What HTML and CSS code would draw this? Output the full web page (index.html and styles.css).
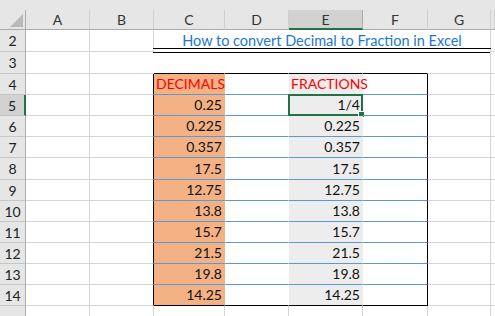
FILE: index.html
```html
<!DOCTYPE html>
<html lang="en">
<head>
    <meta charset="UTF-8">
    <title>How to convert Decimal to Fraction in Excel</title>
    <link rel="stylesheet" href="styles.css">
</head>
<body>
    <div class="sheet">
        <div class="band"></div>

        <!-- column headers -->
        <div class="row head">
            <div class="corner">
                <svg width="13" height="13" viewBox="0 0 13 13"><polygon points="13,0 13,13 0,13" fill="#b9b9b9"/></svg>
            </div>
            <div class="ch">A</div>
            <div class="ch">B</div>
            <div class="ch">C</div>
            <div class="ch">D</div>
            <div class="ch on">E</div>
            <div class="ch">F</div>
            <div class="ch">G</div>
            <div class="ch"></div>
        </div>

        <div class="row tall">
            <div class="rh">2</div>
            <div class="c"></div>
            <div class="c"></div>
            <div class="c title">How to convert Decimal to Fraction in Excel</div>
            <div class="c"></div>
        </div>

        <div class="row tall">
            <div class="rh">3</div>
            <div class="c"></div>
            <div class="c blank"></div>
            <div class="c cap"></div>
            <div class="c cap"></div>
            <div class="c cap"></div>
            <div class="c cap"></div>
            <div class="c"></div>
            <div class="c"></div>
        </div>

        <div class="row">
            <div class="rh">4</div>
            <div class="c"></div>
            <div class="c edge"></div>
            <div class="c t dec label">DECIMALS</div>
            <div class="c t"></div>
            <div class="c t frac label">FRACTIONS</div>
            <div class="c t end"></div>
            <div class="c"></div>
            <div class="c"></div>
        </div>

        <div class="row">
            <div class="rh on">5</div>
            <div class="c"></div>
            <div class="c edge"></div>
            <div class="c t dec num">0.25</div>
            <div class="c t"></div>
            <div class="c t frac num active">1/4<span class="sel"><span class="handle"></span></span></div>
            <div class="c t end"></div>
            <div class="c"></div>
            <div class="c"></div>
        </div>

        <div class="row">
            <div class="rh">6</div>
            <div class="c"></div>
            <div class="c edge"></div>
            <div class="c t dec num">0.225</div>
            <div class="c t"></div>
            <div class="c t frac num">0.225</div>
            <div class="c t end"></div>
            <div class="c"></div>
            <div class="c"></div>
        </div>

        <div class="row">
            <div class="rh">7</div>
            <div class="c"></div>
            <div class="c edge"></div>
            <div class="c t dec num">0.357</div>
            <div class="c t"></div>
            <div class="c t frac num">0.357</div>
            <div class="c t end"></div>
            <div class="c"></div>
            <div class="c"></div>
        </div>

        <div class="row tall">
            <div class="rh">8</div>
            <div class="c"></div>
            <div class="c edge"></div>
            <div class="c t dec num">17.5</div>
            <div class="c t"></div>
            <div class="c t frac num">17.5</div>
            <div class="c t end"></div>
            <div class="c"></div>
            <div class="c"></div>
        </div>

        <div class="row">
            <div class="rh">9</div>
            <div class="c"></div>
            <div class="c edge"></div>
            <div class="c t dec num">12.75</div>
            <div class="c t"></div>
            <div class="c t frac num">12.75</div>
            <div class="c t end"></div>
            <div class="c"></div>
            <div class="c"></div>
        </div>

        <div class="row">
            <div class="rh">10</div>
            <div class="c"></div>
            <div class="c edge"></div>
            <div class="c t dec num">13.8</div>
            <div class="c t"></div>
            <div class="c t frac num">13.8</div>
            <div class="c t end"></div>
            <div class="c"></div>
            <div class="c"></div>
        </div>

        <div class="row">
            <div class="rh">11</div>
            <div class="c"></div>
            <div class="c edge"></div>
            <div class="c t dec num">15.7</div>
            <div class="c t"></div>
            <div class="c t frac num">15.7</div>
            <div class="c t end"></div>
            <div class="c"></div>
            <div class="c"></div>
        </div>

        <div class="row">
            <div class="rh">12</div>
            <div class="c"></div>
            <div class="c edge"></div>
            <div class="c t dec num">21.5</div>
            <div class="c t"></div>
            <div class="c t frac num">21.5</div>
            <div class="c t end"></div>
            <div class="c"></div>
            <div class="c"></div>
        </div>

        <div class="row">
            <div class="rh">13</div>
            <div class="c"></div>
            <div class="c edge"></div>
            <div class="c t dec num">19.8</div>
            <div class="c t"></div>
            <div class="c t frac num">19.8</div>
            <div class="c t end"></div>
            <div class="c"></div>
            <div class="c"></div>
        </div>

        <div class="row bottom">
            <div class="rh">14</div>
            <div class="c"></div>
            <div class="c edge"></div>
            <div class="c t dec num">14.25</div>
            <div class="c t"></div>
            <div class="c t frac num">14.25</div>
            <div class="c t end"></div>
            <div class="c"></div>
            <div class="c"></div>
        </div>

        <!-- row 15, only its top edge is in view -->
        <div class="row">
            <div class="rh"></div>
            <div class="c"></div>
            <div class="c"></div>
            <div class="c"></div>
            <div class="c"></div>
            <div class="c"></div>
            <div class="c"></div>
            <div class="c"></div>
            <div class="c"></div>
        </div>
    </div>
</body>
</html>
```

FILE: styles.css
```css
/* Excel-like worksheet */
* {
    margin: 0;
    padding: 0;
    box-sizing: border-box;
}

body {
    background: #fff;
    overflow: hidden;
}

.sheet {
    font-family: Lato, 'Liberation Sans', sans-serif;
    font-size: 14px;
    color: #111;
}

.band {
    height: 10px;
    background: #e6e6e6;
}

.row {
    display: grid;
    grid-template-columns: 26px 64px 64px 71px 64px 74px 65px 63px 1fr;
    height: 21px;
}

.row.tall {
    height: 22px;
}

.row.head {
    height: 20px;
}

/* headers */
.corner {
    background: #e6e6e6;
    border-right: 1px solid #ababab;
    border-bottom: 1px solid #ababab;
    display: flex;
    align-items: flex-end;
    justify-content: flex-end;
    padding: 0 2px 2px 0;
}

.corner svg {
    display: block;
}

.ch {
    background: #e6e6e6;
    border-right: 1px solid #cfcfcf;
    border-bottom: 1px solid #ababab;
    display: flex;
    align-items: center;
    justify-content: center;
    color: #333;
}

.ch.on {
    background: #d2d2d2;
    border-right-color: #ababab;
    border-bottom: 2px solid #217346;
}

.rh {
    background: #e6e6e6;
    border-right: 1px solid #ababab;
    border-bottom: 1px solid #c6c6c6;
    display: flex;
    align-items: center;
    justify-content: center;
    color: #222;
}

.rh.on {
    background: #d2d2d2;
    border-right: 2px solid #217346;
}

/* cells */
.c {
    border-right: 1px solid #d4d4d4;
    border-bottom: 1px solid #d4d4d4;
    display: flex;
    align-items: flex-end;
    padding: 0 2px;
    line-height: 20px;
    white-space: nowrap;
    position: relative;
}

.title {
    grid-column: span 5;
    justify-content: center;
    font-size: 14.5px;
    color: #1e78cf;
    border-bottom-color: transparent;
}

.title::after {
    content: "";
    position: absolute;
    left: -1px;
    right: -1px;
    bottom: -2px;
    height: 3px;
    border-top: 1px solid #000;
    border-bottom: 1px solid #000;
}

.blank {
    border-right-color: transparent;
}

.cap {
    border-right-color: transparent;
    border-bottom-color: #000;
}

.edge {
    border-right-color: #000;
}

.t {
    border-right-color: transparent;
    border-bottom-color: #5b9bd5;
}

.t.end {
    border-right-color: #000;
}

.bottom .t {
    border-bottom-color: #000;
}

.dec {
    background: #f4b183;
}

.frac {
    background: #ededed;
}

.label {
    color: #ff0000;
}

.num {
    justify-content: flex-end;
}

/* selected cell */
.sel {
    position: absolute;
    left: -1px;
    top: -1px;
    right: -1px;
    bottom: -1px;
    border: 2px solid #217346;
}

.handle {
    position: absolute;
    right: -4px;
    bottom: -4px;
    width: 7px;
    height: 7px;
    background: #217346;
    border: 1px solid #fff;
}
```
